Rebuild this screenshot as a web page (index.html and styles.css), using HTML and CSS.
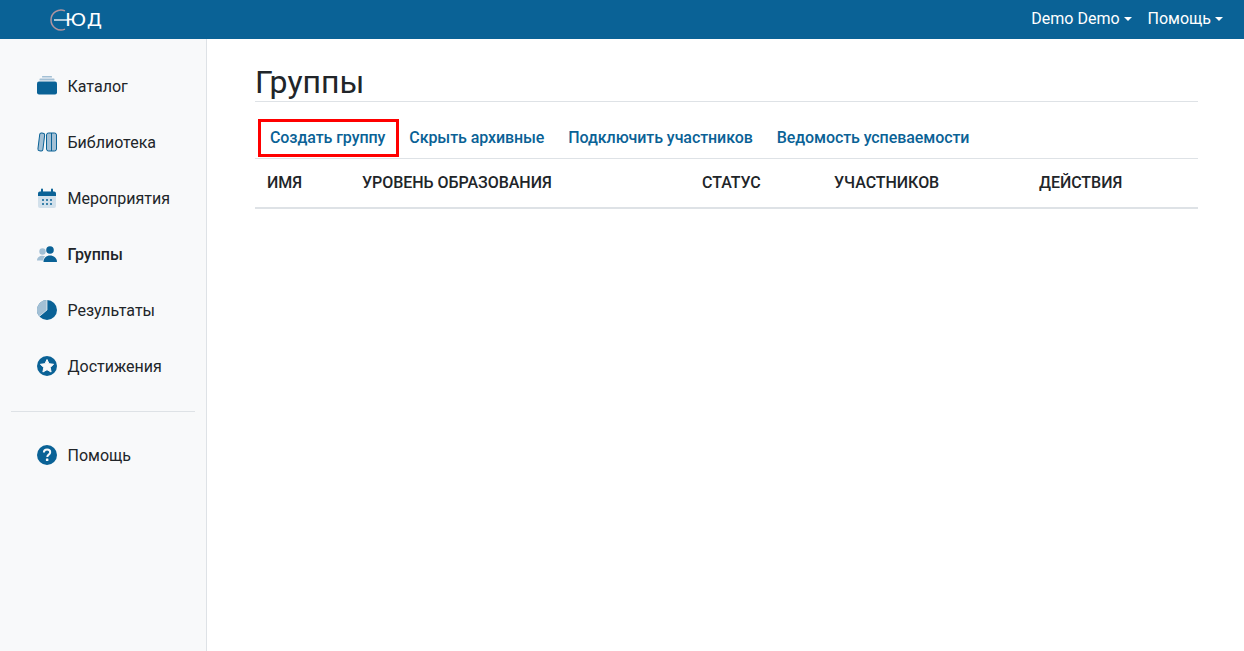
FILE: index.html
```html
<!DOCTYPE html>
<html lang="ru">
<head>
<meta charset="utf-8">
<title>Группы</title>
<link rel="stylesheet" href="styles.css">
</head>
<body>
<header class="topbar">
  <a class="logo">
    <svg class="logo-mark" width="22" height="22" viewBox="0 0 22 22"><path d="M15 1.830A10 10 0 1 0 15 20.170" fill="none" stroke="#b0949f" stroke-width="1.500"/><path d="M4 11H19" stroke="#fff" stroke-width="1.300"/></svg>
    <span class="logo-text">ЮД</span>
  </a>
  <nav class="topnav">
    <a class="caret">Demo Demo</a>
    <a class="caret">Помощь</a>
  </nav>
</header>
<div class="layout">
  <aside class="sidebar">
    <ul class="menu">
      <li class="menu-item">
        <svg class="icon" viewBox="0 0 20 20"><rect x="5" y="0" width="10" height="1.600" rx=".6" fill="#a3c0d5"/><rect x="2.500" y="2.600" width="15" height="2" rx=".6" fill="#a3c0d5"/><rect x="0" y="5.500" width="20" height="13" rx="2" fill="#0a6296"/></svg>
        <span>Каталог</span>
      </li>
      <li class="menu-item">
        <svg class="icon" viewBox="0 0 20 20"><rect x="1.800" y="1" width="5" height="18" rx="1.800" fill="#a3c0d5" stroke="#0a6296" transform="rotate(7 4.300 10)"/><rect x="9.500" y="1" width="10" height="18" rx="2" fill="#a3c0d5" stroke="#0a6296"/><path d="M14.500 1V19" stroke="#0a6296"/></svg>
        <span>Библиотека</span>
      </li>
      <li class="menu-item">
        <svg class="icon" viewBox="0 0 20 20"><rect x="1" y="3.500" width="18" height="16.500" rx="2" fill="#d3e1eb"/><path d="M1 8V5.500a2 2 0 0 1 2-2h14a2 2 0 0 1 2 2V8z" fill="#0a6296"/><path d="M5 1.500V5M15 1.500V5" stroke="#0a6296" stroke-width="2" stroke-linecap="round"/><path d="M5 11h2v2H5zM9 11h2v2H9zM13 11h2v2h-2zM5 15h2v2H5zM9 15h2v2H9zM13 15h2v2h-2z" fill="#0a6296" opacity=".75"/></svg>
        <span>Мероприятия</span>
      </li>
      <li class="menu-item active">
        <svg class="icon" viewBox="0 0 20 20"><circle cx="5.500" cy="7.500" r="3.200" fill="#a3c0d5"/><path d="M0 16.500c0-3 2.500-4.800 5.500-4.800 1 0 2 .2 2.800.6-1.300 1-2 2.500-2 4.200z" fill="#a3c0d5"/><circle cx="13" cy="6" r="3.800" fill="#0a6296"/><path d="M6.500 18c0-4 2.800-6.500 6.500-6.500s7 2.500 7 6.500z" fill="#0a6296"/></svg>
        <span>Группы</span>
      </li>
      <li class="menu-item">
        <svg class="icon" viewBox="0 0 20 20"><circle cx="10" cy="10" r="10" fill="#0a6296"/><path d="M10 10V0A10 10 0 0 0 2.300 16.400z" fill="#a3c0d5"/><path d="M10 0v10l-7.700 6.400" fill="none" stroke="#f8f9fa" stroke-width=".7"/></svg>
        <span>Результаты</span>
      </li>
      <li class="menu-item">
        <svg class="icon" viewBox="0 0 20 20"><circle cx="10" cy="10" r="10" fill="#0a6296"/><path d="M10 3.500l2 4.200 4.600.6-3.400 3.100.9 4.600-4.100-2.300-4.100 2.300.9-4.600-3.400-3.100 4.600-.6z" fill="#f8f9fa" stroke="#f8f9fa" stroke-linejoin="round"/></svg>
        <span>Достижения</span>
      </li>
    </ul>
    <hr class="menu-sep">
    <ul class="menu">
      <li class="menu-item">
        <svg class="icon" viewBox="0 0 20 20"><circle cx="10" cy="10" r="10" fill="#0a6296"/><path d="M6.900 7.600c0-1.900 1.400-3 3.200-3 1.800 0 3.100 1.100 3.100 2.700 0 2.400-2.900 2.300-2.900 4.600" fill="none" stroke="#f8f9fa" stroke-width="2"/><rect x="8.900" y="13.500" width="2.500" height="2.500" rx=".6" fill="#f8f9fa"/></svg>
        <span>Помощь</span>
      </li>
    </ul>
  </aside>
  <main class="content">
    <h1 class="title">Группы</h1>
    <nav class="actions">
      <a class="action highlighted">Создать группу</a>
      <a class="action">Скрыть архивные</a>
      <a class="action">Подключить участников</a>
      <a class="action">Ведомость успеваемости</a>
    </nav>
    <table class="table">
      <thead>
        <tr>
          <th class="col-name">Имя</th>
          <th class="col-level">Уровень образования</th>
          <th class="col-status">Статус</th>
          <th class="col-members">Участников</th>
          <th class="col-actions">Действия</th>
        </tr>
      </thead>
    </table>
  </main>
</div>
</body>
</html>
```
FILE: styles.css
```css
* { box-sizing: border-box; }
html, body { margin: 0; height: 100%; }
body {
  font-family: Roboto, "Liberation Sans", sans-serif;
  font-size: 16px;
  color: #212529;
  background: #fff;
  overflow: hidden;
}
.topbar {
  height: 39px;
  background: #0a6296;
  display: flex;
  align-items: center;
  justify-content: space-between;
  padding: 0 21px 0 50px;
}
.logo { display: flex; align-items: center; color: #fff; }
.logo-mark { margin-right: -7px; }
.logo-text {
  display: inline-block;
  font-family: "DejaVu Sans", sans-serif;
  font-size: 17px;
  letter-spacing: 0.500px;
  line-height: 1;
  margin-top: 1px;
  transform: scaleX(1.15);
  transform-origin: left center;
}
.topnav { display: flex; gap: 16px; }
.topnav a { color: #fff; font-size: 16px; line-height: 24px; margin-top: -2px; }
.caret::after {
  content: "";
  display: inline-block;
  margin-left: 4px;
  vertical-align: 3px;
  border-top: 4px solid #fff;
  border-left: 4px solid transparent;
  border-right: 4px solid transparent;
}
.layout { display: flex; height: 612px; }
.sidebar {
  width: 207px;
  flex: none;
  background: #f8f9fa;
  border-right: 1px solid #dee2e6;
  padding: 19px 11px 0;
}
.menu { list-style: none; margin: 0; padding: 0; }
.menu-item {
  height: 56px;
  display: flex;
  align-items: center;
  gap: 10.500px;
  padding-left: 26px;
  font-size: 16px;
  color: #212529;
}
.menu-item.active { font-weight: 500; }
.icon { width: 20px; height: 20px; flex: none; }
.menu-sep {
  margin: 17px 0 15px;
  border: 0;
  border-top: 1px solid #dee2e6;
  width: 184px;
}
.content { flex: 1; padding: 24px 46px 0 48px; min-width: 0; }
.title {
  margin: 0;
  font-size: 32px;
  font-weight: 400;
  line-height: 38px;
  height: 39px;
  border-bottom: 1px solid #dee2e6;
}
.actions {
  display: flex;
  align-items: flex-end;
  height: 57px;
  padding: 0 0 1px 3px;
  border-bottom: 1px solid #dee2e6;
}
.action {
  font-size: 16px;
  font-weight: 500;
  letter-spacing: -0.08px;
  color: #0a6296;
  padding: 0 12px 1px;
  height: 38px;
  white-space: nowrap;
  display: flex;
  align-items: center;
}
.action.highlighted { border: 3px solid #f00; padding: 0 11px 1px 9px; margin-right: -2px; }
.table { width: 100%; border-collapse: collapse; table-layout: fixed; }
.table th {
  height: 49px;
  padding: 0 12px 2px;
  text-align: left;
  font-size: 16px;
  font-weight: 500;
  letter-spacing: -0.04px;
  text-transform: uppercase;
  border-bottom: 2px solid #dee2e6;
  color: #212529;
}
.col-name { width: 95px; }
.col-level { width: 340px; }
.col-status { width: 132px; }
.col-members { width: 205px; }
.col-actions { width: 171px; }
```
